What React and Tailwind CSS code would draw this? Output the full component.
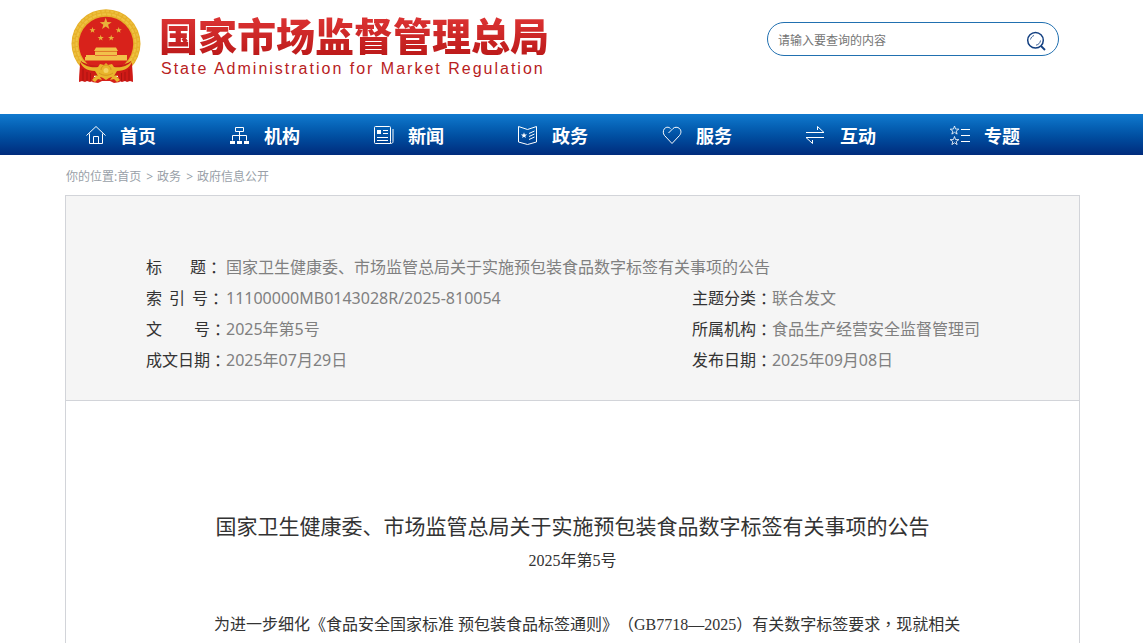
const NAV_ITEMS = [
  { label: "首页", Icon: HomeIcon },
  { label: "机构", Icon: OrgIcon },
  { label: "新闻", Icon: NewsIcon },
  { label: "政务", Icon: AffairsIcon },
  { label: "服务", Icon: ServiceIcon },
  { label: "互动", Icon: InteractIcon },
  { label: "专题", Icon: TopicIcon },
];

const TITLE = "国家卫生健康委、市场监管总局关于实施预包装食品数字标签有关事项的公告";

const STAR = "M0-5 1.2-1.6 4.8-1.5 1.9.6 2.9 4 0 2-2.9 4-1.9.6-4.8-1.5-1.2-1.6Z";

function NavIcon({ children }) {
  return (
    <svg
      viewBox="0 0 22 21"
      className="h-[21px] w-[22px] shrink-0"
      fill="none"
      stroke="currentColor"
      strokeWidth="1"
      aria-hidden="true"
    >
      {children}
    </svg>
  );
}

function HomeIcon() {
  return (
    <NavIcon>
      <path d="M0.5 11.5 10 2.5l9.5 9" />
      <path d="M3.5 9.5v10h13v-10" />
      <path d="M7.5 19.5v-7h5v7" />
    </NavIcon>
  );
}

function OrgIcon() {
  return (
    <NavIcon>
      <path d="M5.5 3.5h8v4h-8zM9.5 7.5v9M2.5 16.5v-5h14v5" />
      <path d="M0 17h5v3H0zM7 17h5v3H7zM14 17h5v3h-5z" fill="currentColor" stroke="none" />
    </NavIcon>
  );
}

function NewsIcon() {
  return (
    <NavIcon>
      <path d="M16.5 17.5v2h-15a1 1 0 0 1-1-1v-15a1 1 0 0 1 1-1h14a1 1 0 0 1 1 1z" />
      <path d="M16.5 19.5c1.5 0 2.500-.5 2.500-2" />
      <path d="M19 5v12.500" />
      <path d="M3 6h4v4H3z" fill="currentColor" stroke="none" />
      <path d="M9 6.5h5M9 9.5h5M3 13.5h11M3 16.5h11" />
    </NavIcon>
  );
}

function AffairsIcon() {
  return (
    <NavIcon>
      <path d="M0.5 2.5 9.5 5.5l9-3V18l-9 2.500L0.5 18z" />
      <path d={STAR} transform="translate(6 11.5) scale(0.65)" fill="currentColor" stroke="none" />
      <path d="M11 9.500 16.500 7M11 12.500 16.500 10M11 15.500 16.500 13" />
    </NavIcon>
  );
}

function ServiceIcon() {
  return (
    <NavIcon>
      <path d="M8.5 4.5C6.5 2.5 3.5 3 2.2 5S1 9.5 2.5 11.5L10 19.5l7.5-8C19.5 9 19.3 6.3 17.5 4.5 15.5 2.7 12.5 3 11 4.5L6.5 9" />
    </NavIcon>
  );
}

function InteractIcon() {
  return (
    <NavIcon>
      <path d="M0 8.5h18L11.5 2.5v3.5" />
      <path d="M18 13.5H0l6.500 6V16" />
    </NavIcon>
  );
}

function TopicIcon() {
  return (
    <NavIcon>
      <g strokeWidth="0.9">
        <path d={STAR} transform="translate(4.5 6.5) scale(0.9)" />
        <path d={STAR} transform="translate(4.5 17) scale(0.9)" />
      </g>
      <path d="M11 5.5h9M11 11.5h9M11 17.5h9" />
    </NavIcon>
  );
}

function Emblem() {
  return (
    <svg viewBox="0 0 70 75" className="h-[75px] w-[70px] shrink-0" aria-hidden="true">
      <circle cx="35" cy="34.7" r="34.5" fill="#e6b02a" />
      <circle cx="35" cy="34.7" r="32.5" fill="none" stroke="#edbf3c" strokeWidth="2" strokeDasharray="3 1.5" />
      <circle cx="35" cy="34.7" r="29.5" fill="none" stroke="#efc241" strokeWidth="2" strokeDasharray="4 1" />
      <circle cx="35" cy="35" r="27.2" fill="#d8221b" />
      <g fill="#e9b23a">
        <path d={STAR} transform="translate(34.7 15) scale(1.25)" />
        <path d={STAR} transform="translate(21.5 21.3) scale(0.64)" />
        <path d={STAR} transform="translate(47.7 21.3) scale(0.64)" />
        <path d={STAR} transform="translate(29.7 29) scale(0.64)" />
        <path d={STAR} transform="translate(40.2 29) scale(0.64)" />
      </g>
      <g fill="#f2c14a">
        <path d="M25 38.5h20l2 3.5H23zM24 42.5h22v4H24z" />
        <path d="M15 46h9v1h22v-1h10v5.5H14V48h1z" />
      </g>
      <path d="M24 42.3h22" stroke="#d98d1c" strokeWidth="0.5" />
      <path d="M10 52c8 7 42 7 50 0 0 4 3 10-2 12-10 4-36 4-46 0-5-2-2-8-2-12z" fill="#c81d17" />
      <path d="M9 53 14 60l10 3-2 9-3 1-3-1-2 1-3-1-3 1c0-8 1-14 1-20z" fill="#cf1a16" />
      <path d="M61 53 56 60l-10 3 2 9 3 1 3-1 2 1 3-1 3 1c0-8-1-14-1-20z" fill="#cf1a16" />
      <path d="M12 60v12M16 63v9M19.5 64v8M58 60v12M54 63v9M50.5 64v8" stroke="#98110f" strokeWidth="0.7" />
      <path d="M23 68h24l2 5-6 1-4-2h-8l-4 2-6-1z" fill="#d52019" />
      <path d="M9 52c5 6 13 7 18 6l2-3 4 1 2-2 2 2 4-1 2 3c5 1 13 0 18-6-1 6-7 10-15 10l-3 5-5 2-3 2-3-2-5-2-3-5c-8 0-14-4-15-10z" fill="#e9b52c" />
      <path d="M30 61a5 5 0 0 1 10 0M28 64c4 3 10 3 14 0" fill="none" stroke="#cf8d1c" strokeWidth="0.8" />
      <circle cx="35" cy="61.5" r="2.5" fill="#f5d260" />
      <path d="M21 71l4-4 4 1 2 3-4-1-3 3zM49 71l-4-4-4 1-2 3 4-1 3 3z" fill="#e9b52c" />
    </svg>
  );
}

function SearchIcon() {
  return (
    <svg viewBox="0 0 20 20" className="h-5 w-5" fill="none" stroke="#123f80" aria-hidden="true">
      <circle cx="9.5" cy="9.3" r="7.8" strokeWidth="1.5" />
      <path d="M15 15l4 4" strokeWidth="1.8" />
      <path d="M4.5 8.5C5 6.5 6 5.3 8 4.5M14.5 9.5c-.3 2.5-1.8 4-4.5 4.7" strokeWidth="0.8" />
    </svg>
  );
}

// 全角标点居中显示
function Mark({ children }) {
  return <span className="font-['Noto_Sans_CJK_TC',sans-serif]">{children}</span>;
}

function MetaItem({ label, gap = "", value, className = "" }) {
  return (
    <div className={`flex ${className}`}>
      <dt className="flex w-20 shrink-0 text-[#333]">
        <span className={`flex ${gap}`}>
          {label.split("").map((c) => (
            <span key={c}>{c}</span>
          ))}
        </span>
        <Mark>：</Mark>
      </dt>
      <dd className="text-[#808080]">{value}</dd>
    </div>
  );
}

export default function App() {
  return (
    <div className="flex min-h-screen flex-col bg-white font-['Noto_Sans','Noto_Sans_CJK_SC',sans-serif]">
      <header className="flex h-[114px] items-start justify-between pr-[84px] pl-[71px]">
        <a href="#" className="flex pt-[9px]">
          <Emblem />
          <div className="pt-1 pl-[18px]">
            <h1 className="bg-linear-to-b from-[#df3535] to-[#bd1a1a] bg-clip-text font-['Noto_Sans_CJK_SC',sans-serif] text-[39px] leading-[42px] font-black whitespace-nowrap text-transparent">
              国家市场监督管理总局
            </h1>
            <p className="pt-1 pl-[2px] font-['Liberation_Sans',sans-serif] text-base leading-5 tracking-[2px] whitespace-nowrap text-[#b8211d]">
              State Administration for Market Regulation
            </p>
          </div>
        </a>
        <form
          className="mt-[22px] flex h-[34px] w-[292px] items-center rounded-full border border-[#2170b0] pr-3 pl-[10px]"
          onSubmit={(e) => e.preventDefault()}
        >
          <input
            type="text"
            aria-label="搜索"
            placeholder="请输入要查询的内容"
            className="min-w-0 flex-1 pt-1 text-xs text-[#333] outline-none placeholder:text-[#757575]"
          />
          <button type="submit" aria-label="查询" className="pt-[3px]">
            <SearchIcon />
          </button>
        </form>
      </header>

      <nav className="h-[41px] bg-linear-to-b from-[#117acf] to-[#002b7c] pl-[65px]">
        <ul className="flex h-full">
          {NAV_ITEMS.map(({ label, Icon }) => (
            <li key={label} className="w-36">
              <a href="#" className="flex h-full items-center gap-3 pl-[21px] text-white">
                <Icon />
                <span className="pt-[2px] text-lg leading-6 font-bold">{label}</span>
              </a>
            </li>
          ))}
        </ul>
      </nav>

      <main className="flex flex-1 flex-col pr-[63px] pl-[65px]">
        <div className="flex h-10 items-center pt-1 pl-px text-xs text-[#999fa8]">
          <span>你的位置:</span>
          <a href="#">首页</a>
          <span className="pr-1 pl-[5px]">&gt;</span>
          <a href="#">政务</a>
          <span className="pr-1 pl-[5px]">&gt;</span>
          <a href="#">政府信息公开</a>
        </div>

        <section className="flex-1 border border-b-0 border-[#d2d4d9]">
          <dl className="grid grid-cols-[64%_1fr] border-b border-[#d2d4d9] bg-[#f5f5f5] px-20 pt-14 pb-6 text-base leading-[31px]">
            <MetaItem label="标题" gap="gap-7" value={TITLE} className="col-span-2" />
            <MetaItem label="索引号" gap="gap-[7px]" value="11100000MB0143028R/2025-810054" />
            <MetaItem label="主题分类" value="联合发文" />
            <MetaItem label="文号" gap="gap-8" value="2025年第5号" />
            <MetaItem label="所属机构" value="食品生产经营安全监督管理司" />
            <MetaItem label="成文日期" value="2025年07月29日" />
            <MetaItem label="发布日期" value="2025年09月08日" />
          </dl>

          <article className="px-[116px] pt-[110px] font-['Liberation_Serif','Noto_Sans_CJK_SC',sans-serif] text-base leading-8 text-[#333] [text-spacing-trim:space-all]">
            <h2 className="text-center text-[21px] leading-8">{TITLE}</h2>
            <p className="pt-[2px] text-center">2025年第5号</p>
            <p className="pt-[30px] indent-8">
              为进一步细化《食品安全国家标准 预包装食品标签通则》<Mark>（</Mark>GB7718—2025<Mark>）</Mark>有关数字标签要求<Mark>，</Mark>现就相关
            </p>
          </article>
        </section>
      </main>
    </div>
  );
}
